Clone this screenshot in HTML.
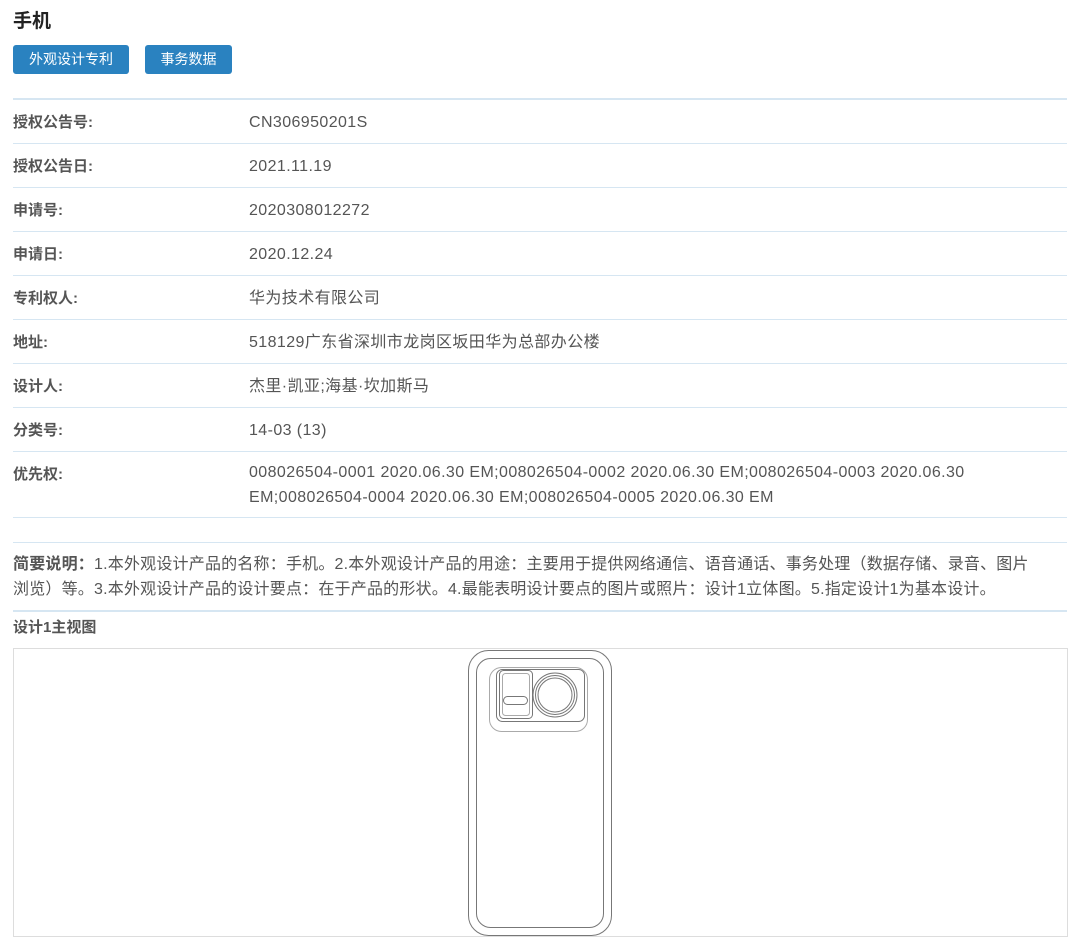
<!DOCTYPE html>
<html><head><meta charset="utf-8"><style>
body{margin:0;width:1080px;height:940px;background:#fff;font-family:"Liberation Sans","Noto Sans CJK SC",sans-serif;color:#555;overflow:hidden;position:relative}
h1{position:absolute;left:13px;top:6px;margin:0;font-size:19px;color:#222;font-weight:bold}
.btn{position:absolute;top:45px;height:29px;line-height:29px;background:#2a82c0;color:#fff;font-size:14px;text-align:center;border-radius:3px}
.hr{position:absolute;left:13px;width:1054px;height:1px;background:#d6e6f2}
.lab{position:absolute;left:13px;font-size:15px;font-weight:bold;color:#555}
.val{position:absolute;left:249px;font-size:16px;letter-spacing:0.4px;color:#555;line-height:25px}
.desc{position:absolute;left:13px;top:552px;width:1028px;font-size:16px;letter-spacing:0.2px;line-height:25px;color:#555}
.box{position:absolute;left:13px;top:648px;width:1053px;height:287px;border:1px solid #ddd}
</style></head><body>
<h1>手机</h1>
<div class="btn" style="left:13px;width:116px">外观设计专利</div>
<div class="btn" style="left:145px;width:87px">事务数据</div>
<div class="hr" style="top:98px;height:2px"></div>
<div class="lab" style="top:111px">授权公告号:</div><div class="val" style="top:110px">CN306950201S</div>
<div class="hr" style="top:143px"></div>
<div class="lab" style="top:155px">授权公告日:</div><div class="val" style="top:154px">2021.11.19</div>
<div class="hr" style="top:187px"></div>
<div class="lab" style="top:199px">申请号:</div><div class="val" style="top:198px">2020308012272</div>
<div class="hr" style="top:231px"></div>
<div class="lab" style="top:243px">申请日:</div><div class="val" style="top:242px">2020.12.24</div>
<div class="hr" style="top:275px"></div>
<div class="lab" style="top:287px">专利权人:</div><div class="val" style="top:286px">华为技术有限公司</div>
<div class="hr" style="top:319px"></div>
<div class="lab" style="top:331px">地址:</div><div class="val" style="top:330px">518129广东省深圳市龙岗区坂田华为总部办公楼</div>
<div class="hr" style="top:363px"></div>
<div class="lab" style="top:375px">设计人:</div><div class="val" style="top:374px">杰里·凯亚;海基·坎加斯马</div>
<div class="hr" style="top:407px"></div>
<div class="lab" style="top:419px">分类号:</div><div class="val" style="top:418px">14-03 (13)</div>
<div class="hr" style="top:451px"></div>
<div class="lab" style="top:463px">优先权:</div><div class="val" style="top:460px;width:730px">008026504-0001 2020.06.30 EM;008026504-0002 2020.06.30 EM;008026504-0003 2020.06.30 EM;008026504-0004 2020.06.30 EM;008026504-0005 2020.06.30 EM</div>
<div class="hr" style="top:517px"></div>
<div class="hr" style="top:542px"></div>
<div class="desc"><b>简要说明：</b>1.本外观设计产品的名称：手机。2.本外观设计产品的用途：主要用于提供网络通信、语音通话、事务处理（数据存储、录音、图片浏览）等。3.本外观设计产品的设计要点：在于产品的形状。4.最能表明设计要点的图片或照片：设计1立体图。5.指定设计1为基本设计。</div>
<div class="hr" style="top:610px;height:2px"></div>
<div class="lab" style="top:616px">设计1主视图</div>
<div class="box"></div>
<svg style="position:absolute;left:0;top:0" width="1080" height="940" fill="none" stroke="#777" stroke-width="1">
<rect x="468.5" y="650.5" width="143" height="285" rx="20"/>
<rect x="476.5" y="658.5" width="127" height="269" rx="14"/>
<rect x="489.5" y="667.5" width="98" height="64" rx="12" stroke="#aaa"/>
<rect x="496.5" y="669.5" width="88" height="52" rx="6"/>
<rect x="499.5" y="670.5" width="33" height="48" rx="4"/>
<rect x="502.5" y="673.5" width="27" height="42" rx="3" stroke="#aaa"/>
<rect x="503.5" y="696.5" width="24" height="8" rx="4"/>
<circle cx="555" cy="695" r="22"/>
<circle cx="555" cy="695" r="19.5"/>
<circle cx="555" cy="695" r="17"/>
</svg>
</body></html>
